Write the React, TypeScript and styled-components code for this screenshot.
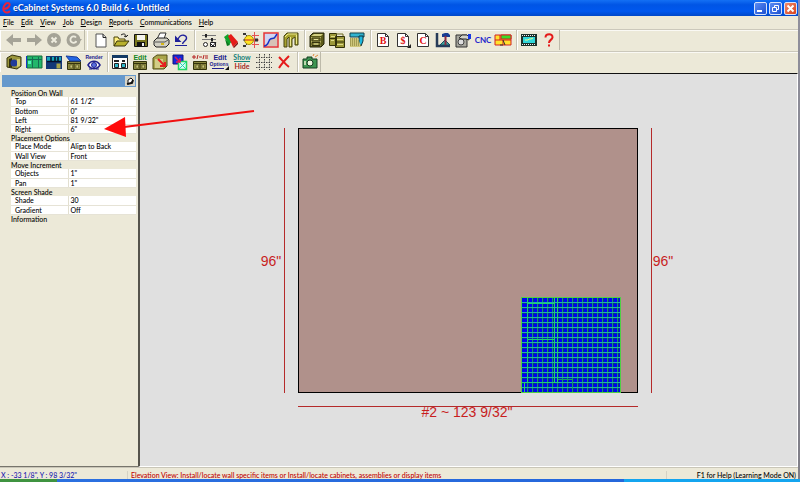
import React from "react";
import styled, { createGlobalStyle } from "styled-components";

const GlobalStyle = createGlobalStyle`
  * { box-sizing: border-box; }
  body { margin: 0; background: #ece9d8; }
  button { font: inherit; color: inherit; }
`;

const Desktop = styled.div`
  display: flex;
  flex-direction: column;
  min-height: 100vh;
  position: relative;
  overflow: hidden;
  font-family: Lato, "Noto Sans", sans-serif;
  font-size: 7px;
  font-weight: 500;
  line-height: 8px;
  color: #000;
`;

const WindowRow = styled.div`
  flex: 1;
  display: flex;
  background: linear-gradient(#7b86c8, #8f8f9b 16px, #807f88);
`;

const AppWindow = styled.div`
  flex: 1;
  min-width: 0;
  margin-right: 2px;
  display: flex;
  flex-direction: column;
  background: #ece9d8;
`;

const TitleBar = styled.header`
  display: flex;
  align-items: center;
  height: 16px;
  padding: 0 1px 0 2px;
  gap: 2px;
  background: linear-gradient(#1470f4, #0055e5 30%, #0058ee 70%, #0048c8);
`;

const Title = styled.h1`
  flex: 1;
  margin: 0;
  color: #fff;
  font: bold 9px/14px Lato, sans-serif;
  text-shadow: 1px 1px 0 #0a3794;
`;

const CaptionButton = styled.button<{ $close?: boolean }>`
  width: 13px;
  height: 13px;
  padding: 0;
  border: 1px solid #d5e2fb;
  border-radius: 2px;
  background: ${(p) => (p.$close ? "linear-gradient(135deg,#ee8a6b,#d8421c)" : "linear-gradient(135deg,#5b8cf4,#1c50d0)")};
  svg { display: block; }
`;

const MenuBar = styled.nav`
  display: flex;
  align-items: center;
  gap: 7px;
  height: 13px;
  padding-left: 3px;
`;

const MenuItem = styled.button`
  padding: 0;
  border: 0;
  background: none;
  line-height: 9px;
  &::first-letter { text-decoration: underline; }
`;

const ToolStrip = styled.div`
  display: flex;
  align-items: flex-start;
  height: 22px;
  border-top: 1px solid #cbc8bb;
  box-shadow: inset 0 1px #faf9f4;
`;

const ToolGroup = styled.div`
  display: flex;
  height: 20px;
  padding-left: 3px;
  margin-right: 2px;
  border-left: 1px solid #fff;
  border-right: 1px solid #bdbaaa;
`;

const ToolButton = styled.button<{ $wide?: boolean }>`
  display: flex;
  align-items: center;
  justify-content: center;
  width: ${(p) => (p.$wide ? 24 : 20)}px;
  height: 20px;
  padding: 0;
  border: 0;
  background: none;
`;

const Separator = styled.span`
  width: 6px;
  height: 20px;
  background: linear-gradient(90deg, transparent 3px, #c5c2b4 3px, #c5c2b4 4px, #fff 4px, #fff 5px, transparent 5px);
`;

const Workspace = styled.main`
  flex: 1;
  display: flex;
`;

const SidePanel = styled.aside`
  flex: 0 0 138px;
  padding: 2px 2px 0 2px;
  border-bottom: 1px solid #77756c;
`;

const PanelHeader = styled.div`
  display: flex;
  justify-content: flex-end;
  height: 12px;
  padding: 1px;
  margin-bottom: 1px;
  background: #6699cc;
`;

const PinButton = styled.button`
  width: 10px;
  height: 10px;
  padding: 0;
  border: 0;
  background: #d8d5c8;
  svg { display: block; }
`;

const PropertyTable = styled.table`
  width: 100%;
  border-collapse: collapse;
  table-layout: fixed;
`;

const SectionCell = styled.th`
  height: 9px;
  padding: 0 0 0 9px;
  text-align: left;
  font-weight: 500;
  line-height: 8px;
`;

const GutterCell = styled.td`
  width: 9px;
  padding: 0;
`;

const NameCell = styled.th`
  width: 57px;
  height: 9px;
  padding: 0 0 0 4px;
  border-right: 1px solid #e2dfd0;
  border-bottom: 1px solid #e6e3d6;
  background: #fff;
  text-align: left;
  font-weight: 500;
  line-height: 8px;
`;

const ValueCell = styled.td`
  padding: 0 0 0 2px;
  border-bottom: 1px solid #e6e3d6;
  background: #fff;
  line-height: 8px;
`;

const Canvas = styled.section`
  flex: 1;
  min-width: 0;
  display: flex;
  justify-content: center;
  align-items: flex-start;
  padding-top: 51px;
  border-top: 1px solid #111;
  border-left: 2px solid #55534c;
  border-right: 1px solid #fff;
  border-bottom: 1px solid #fff;
  background: #e0e0e0;
  svg { display: block; }
`;

const StatusBar = styled.footer`
  display: flex;
  align-items: center;
  height: 12px;
  padding: 2px 2px 0 1px;
  border-top: 1px solid #c9c6b8;
`;

const StatusCell = styled.span<{ $tone?: string; $width?: number }>`
  ${(p) => (p.$width ? `flex: 0 0 ${p.$width}px;` : "flex: 1;")}
  padding-left: ${(p) => (p.$tone === "#c00000" ? 3 : 0)}px;
  border-right: ${(p) => (p.$tone ? "1px solid #d5d2c4" : 0)};
  color: ${(p) => p.$tone ?? "#000"};
  text-align: ${(p) => (p.$tone ? "left" : "right")};
  white-space: nowrap;
`;

const TaskBar = styled.div`
  display: flex;
  height: 3px;
  background: linear-gradient(90deg, #3f9340 57px, #2b70e0 57px, #2567db 78%, #14a5ef 78%);
`;

const ArrowOverlay = styled.svg`
  position: absolute;
  left: 100px;
  top: 106px;
  pointer-events: none;
`;

const Gray = "#a5a397";
const page = <path d="M2.500 1.500h8l3 3v10h-11z" fill="#fff" stroke="#333" />;
const letter = (t: string) => (
  <>
    {page}
    <path d="M10.500 1.500v3h3" fill="none" stroke="#333" />
    <text x="8" y="12" textAnchor="middle" fontFamily="Liberation Serif" fontWeight="bold" fontSize="10" fill="#e01010">{t}</text>
  </>
);
const cabinet = (
  <>
    <path d="M1 4l3-3h11v11l-3 3H1z" fill="#5c5a18" stroke="#222208" />
    <path d="M2 5h10v9H2z" fill="#b3b05c" />
    <path d="M3 6h8v3H3zM3 10.500h8v3H3z" fill="#8a873a" stroke="#34330c" />
    <path d="M5 7.500h4M5 12h4" stroke="#e4e19a" />
    <path d="M2 4l3-2h9l-2 2z" fill="#d2cf80" />
  </>
);
const smallCabinet = (
  <>
    <path d="M1.500 7.500h13v8h-13z" fill="#8c8940" stroke="#34330c" />
    <path d="M2 9.500h12M8 10v5" stroke="#34330c" />
    <path d="M4 11h2.500v3H4zM10 11h2.500v3H10z" fill="#c9c57b" stroke="#55531b" strokeWidth=".6" />
  </>
);

const icons: Record<string, React.ReactNode> = {
  Back: <path d="M0 8l7-6v4h8v4H7v4z" fill={Gray} />,
  Forward: <path d="M16 8L9 2v4H1v4h8v4z" fill={Gray} />,
  Stop: <><circle cx="8" cy="8" r="7" fill={Gray} /><path d="M5.500 5.500l5 5m0-5l-5 5" stroke="#eeecdf" strokeWidth="2" /></>,
  Refresh: <><circle cx="7.500" cy="8" r="7" fill={Gray} /><path d="M10 5.500A3.200 3.200 0 1 0 10.500 9" fill="none" stroke="#eeecdf" strokeWidth="1.800" /><path d="M9 7h7l-3.500 4z" fill={Gray} /></>,
  New: <><path d="M3 2h7l3 3v10H3z" fill="#fff" stroke="#555" /><path d="M10 2v3.500h3" fill="#ddd" stroke="#222" /></>,
  Open: <><path d="M1 14V5h4l1 2h6v3" fill="#ffee80" stroke="#4a4308" /><path d="M1 14l3-5h12l-4 5z" fill="#b8b02c" stroke="#37330a" /><path d="M8 3c3-2 5-1 5 2m-2-1l2 1 2-2" fill="none" stroke="#222" /></>,
  Save: <><path d="M1.500 2.500h13v12h-13z" fill="#77751c" stroke="#111" /><path d="M4 3h8v5H4z" fill="#f4f4ee" /><path d="M4 10h8v4H4z" fill="#111" /><path d="M9 11h2v3H9z" fill="#eee" /></>,
  Print: <><path d="M4 7l3-6h6l-2 6z" fill="#fff" stroke="#333" /><path d="M1 9l3-3h10l2 2v4l-3 3H3l-2-2z" fill="#d1d0c4" stroke="#222" /><path d="M2 10h10l3-2" fill="none" stroke="#555" /><path d="M8 12h3" stroke="#d6b617" strokeWidth="2" /></>,
  Undo: <><path d="M5 7C8 1 14 3 13.500 6.500 13 9 10 9.500 9.500 12" fill="none" stroke="#20209a" strokeWidth="1.400" /><path d="M2 3.500v6.500h6.500z" fill="#20209a" /><path d="M2 13.500h12" stroke="#20209a" /></>,
  Settings: <><path d="M1 3.500h14M1 7.500h14" stroke="#777" /><path d="M5 2v3.500M11 6v3.500" stroke="#222" strokeWidth="2" /><circle cx="4.500" cy="12.500" r="2" fill="#fff" stroke="#222" /><path d="M9.500 10.500h5v4h-5z" fill="#fff" stroke="#222" /><path d="M10 12l2 2 3-4" fill="none" stroke="#222" /></>,
  Materials: <><path d="M1 5l4-3 4 7-3 4z" fill="#10a52c" /><path d="M5 4l3-2 7 8-5 5z" fill="#e51c18" /><path d="M10 15l5-5v2l-4 4z" fill="#861412" /><path d="M2 7l5 6-3 1z" fill="#087a1d" /></>,
  Hardware: <><path d="M11.500 0v16M9 3.500h7M9 8h7M9 12.500h7" stroke="#e55252" /><circle cx="6" cy="8" r="4.500" fill="#ffe321" stroke="#a08c0b" /><path d="M2 8h8" stroke="#cb2525" /><path d="M0 8h2M2 2l2 2M2 14l2-2" stroke="#454545" /><path d="M0 1h3v2H0zM0 13h3v2H0zM12 6.500h3v3h-3z" fill="#353535" /></>,
  Profile: <><path d="M1 1h14v14H1z" fill="#cfd4f2" stroke="#e63434" strokeWidth="1.500" /><path d="M2 14V12l4-1 1-5 5-1 2-3v12z" fill="#d8c2b6" /><path d="M1 14c4 0 4-3 5-5 1-4 5-1 6-4l2-3" fill="none" stroke="#1632c8" strokeWidth="1.500" /></>,
  Doors: <><path d="M1 4l3-3h11v12h-3V5L9 7v8H6V5L4 7v8H1z" fill="#a6a12f" stroke="#474512" /><path d="M2 5l3-3h9M13.500 3v9M7.500 5v9" fill="none" stroke="#ece88a" /></>,
  Cabinet: cabinet,
  Assemblies: <><path d="M.500 1.500h7v12h-7zM6.500 4.500h9v11h-9z" fill="#9c983a" stroke="#33310b" /><path d="M2 4.500h4M8 7.500h6M8 12.500h6M2 8.500h3" stroke="#e0dc8a" /><path d="M7 10h8M1 6.500h5" stroke="#33310b" /><path d="M7 2h7v2" fill="none" stroke="#6e6b20" /></>,
  Room: <><path d="M1 1h14v4H1z" fill="#30b4d0" stroke="#14404a" /><path d="M10 4h4v5l-2 5-2-2z" fill="#1fb9df" stroke="#12333b" /><path d="M1 6h8l3 9H1z" fill="#cfc77c" /><path d="M1 7h8M1 9h9M1 11h10M1 13h11" stroke="#77702c" strokeDasharray="1 1" /></>,
  "Buy list": letter("B"),
  Pricing: <>{letter("$")}<path d="M16 12v4h-4z" fill="#222" /></>,
  "Cut list": letter("C"),
  Construction: <><path d="M2 1v13h13" fill="none" stroke="#263b58" strokeWidth="2.500" /><path d="M5 13l5-5 5 5z" fill="#39a89d" stroke="#1d4a60" /><path d="M7 2l3-1h3l2 2v2H7z" fill="#173c91" /><path d="M10.500 4v9" stroke="#8a2c42" strokeWidth="2" /></>,
  Tooling: <><path d="M1 3h11v12H1z" fill="#a7a79e" stroke="#333" /><circle cx="6" cy="10" r="3" fill="#ddd" stroke="#444" /><path d="M4 6l3-3h5l2 2v3l-3-1H7z" fill="#d2d2c6" stroke="#333" /><path d="M13 2h3v5h-3z" fill="#1839e0" /></>,
  CNC: <text x="8" y="11" textAnchor="middle" fontFamily="Lato" fontWeight="bold" fontSize="8" fill="#2222cc">CNC</text>,
  Nesting: <><path d="M0 3h16v10H0z" fill="#ffe22c" stroke="#d32323" /><path d="M6 3h10v4H6z" fill="#39dc27" stroke="#d32323" /><path d="M0 8h16M5 3v5M8 8v5" stroke="#d32323" /><path d="M8 8l2 5M5 13h3" stroke="#333" /></>,
  Movie: <><path d="M0 2h16v12H0z" fill="#1b3029" /><path d="M2 5h12v6H2z" fill="#30d6d9" /><path d="M1 3.500h14M1 12.500h14" stroke="#eee" strokeDasharray="1 1" /><path d="M4 8h3l1-1h2l2-1" stroke="#e9ff8a" fill="none" /></>,
  Help: <><path d="M4.500 5.500C4.500 1 12 1 11.500 5.500 11 8 8 8 8 11" fill="none" stroke="#e41a1a" strokeWidth="2" /><path d="M7 12.500h2v2H7z" fill="#e41a1a" /></>,
  "Add cabinet": <><path d="M1 4l5-3 9 2v9l-4 3-10-2z" fill="#9a963c" stroke="#34320d" /><path d="M3 5l3-1v10l-3-1z" fill="#333110" /><circle cx="8" cy="9" r="3.500" fill="#203b99" /><path d="M11 5h3v7l-3 1z" fill="#d0ca75" /></>,
  "Wall view": <><path d="M1 2h15v12H1z" fill="#22b66b" stroke="#126d3b" /><path d="M1 5.500h15M6.500 3v11M12.500 3v11" stroke="#156d52" /><path d="M2 7h3v3H2z" fill="#52f3bc" /><path d="M.500 2v12" stroke="#1538cc" /></>,
  "Room view": <><path d="M0 2h16v13H0z" fill="#123778" /><path d="M1 3h14v4H1z" fill="#18a7bc" /><path d="M1 7.500h14M5 3v4M9 3v4M12 3v4" stroke="#06102b" strokeWidth="1.500" /><path d="M10.500 9.500h4v5h-4z" fill="#a9a448" /></>,
  "Cabinet list": <>{smallCabinet}<path d="M0 2l11 1 4 4H4z" fill="#2366e4" stroke="#183c9a" /></>,
  Render: <><text x="8" y="5" textAnchor="middle" fontFamily="Liberation Sans" fontWeight="bold" fontSize="5" fill="#20208c">Render</text><path d="M2 11c3-5 9-5 12 0-3 5-9 5-12 0z" fill="#fff" stroke="#20208c" strokeWidth="1.500" /><circle cx="8" cy="11" r="2.500" fill="#5a6fdd" stroke="#20208c" /><path d="M3 15h3M10 15h3" stroke="#20208c" /></>,
  Layout: <><path d="M.500 1.500h15v13H.500z" fill="#fff" stroke="#222" /><path d="M0 1h16v3H0z" fill="#143b65" /><path d="M2 6h5v2H2zM10 6h3v2h-3z" fill="#222" /><path d="M2.500 9.500h4v4h-4zM9.500 9.500h4v4h-4z" fill="#31b8ca" stroke="#222" /></>,
  "Edit cabinet": <>{smallCabinet}<text x="8" y="6" textAnchor="middle" fontFamily="Liberation Sans" fontWeight="bold" fontSize="7" fill="#148622">Edit</text></>,
  "Move cabinet": <><path d="M1 4l4-3h10v11l-3 3H1z" fill="#aaa54b" stroke="#504d17" /><path d="M3 5h8v9H3z" fill="#d2cd87" /><path d="M6 5l6 6m-4 1h5V8" fill="none" stroke="#e52020" strokeWidth="2" /></>,
  Copy: <><path d="M1 1h10v9H1z" fill="#1628da" stroke="#11147b" /><path d="M6.500 7.500h8v8h-8z" fill="#d6fff0" stroke="#22d861" strokeWidth="1.500" /><path d="M7 15l7-7M7 8l7 7" stroke="#28cdb6" /><path d="M3 3l5 5m-4 0h4V4" fill="none" stroke="#e41655" strokeWidth="1.500" /></>,
  Operations: <>{smallCabinet}<path d="M0 3h4M2 1v4M5 5l1-4M7 3h3M11 5l1-4M13 2h3M13 4h3" stroke="#b42121" /></>,
  "Edit Options": <><text x="8" y="6" textAnchor="middle" fontFamily="Liberation Sans" fontWeight="bold" fontSize="7" fill="#20208c">Edit</text><text x="7" y="12" textAnchor="middle" fontFamily="Liberation Sans" fontWeight="bold" fontSize="5" fill="#20208c">Options</text><path d="M0 14.500h12" stroke="#20208c" /><path d="M17 12v4h-4z" fill="#111" /></>,
  "Show Hide": <><text x="8" y="6" textAnchor="middle" fontFamily="Lato" fontWeight="bold" fontSize="7" fill="#148078">Show</text><path d="M0 7.500h16" stroke="#148078" /><text x="8" y="15" textAnchor="middle" fontFamily="Lato" fontWeight="bold" fontSize="7" fill="#a32525">Hide</text></>,
  Grid: <path d="M0 3.500h16M0 8.500h16M0 13.500h16M3.500 0v16M8.500 0v16M13.500 0v16" stroke="#444" strokeDasharray="1.500 1" />,
  Delete: <path d="M3 3c3 3 6 7 10 10M13 2C9 6 6 9 3 14" stroke="#e51b1b" strokeWidth="2" fill="none" />,
  Snapshot: <><path d="M1 5h4V3h5v2h5v9H1z" fill="#3e9652" stroke="#153e20" /><circle cx="8" cy="9" r="3" fill="#eef7df" stroke="#163b1e" /><path d="M11 2l1-2m1 3l3-2" stroke="#e28739" /><path d="M2 7h2v4H2z" fill="#bfdab1" /></>,
};

const row1a = ["Back", "Forward", "Stop", "Refresh"];
const row1b = ["New", "Open", "Save", "Print", "Undo", "|", "Settings", "Materials", "Hardware", "Profile", "Doors", "|", "Cabinet", "Assemblies", "Room", "|", "Buy list", "Pricing", "Cut list", "Construction", "Tooling", "CNC", "Nesting", "|", "Movie", "Help"];
const row2 = ["Add cabinet", "Wall view", "Room view", "Cabinet list", "Render", "|", "Layout", "Edit cabinet", "Move cabinet", "Copy", "Operations", "Edit Options", "Show Hide", "Grid", "Delete", "|", "Snapshot"];
const wideTools = ["Settings", "Show Hide"];

function Tools({ names }: { names: string[] }) {
  return (
    <ToolGroup role="group">
      {names.map((name, i) =>
        name === "|" ? (
          <Separator key={i} />
        ) : (
          <ToolButton key={i} aria-label={name} $wide={wideTools.includes(name)}>
            <svg width="16" height="16" viewBox="0 0 16 16" overflow="visible">{icons[name]}</svg>
          </ToolButton>
        )
      )}
    </ToolGroup>
  );
}

const sections: { title: string; rows: [string, string][] }[] = [
  { title: "Position On Wall", rows: [["Top", '61 1/2"'], ["Bottom", '0"'], ["Left", '81 9/32"'], ["Right", '6"']] },
  { title: "Placement Options", rows: [["Place Mode", "Align to Back"], ["Wall View", "Front"]] },
  { title: "Move Increment", rows: [["Objects", '1"'], ["Pan", '1"']] },
  { title: "Screen Shade", rows: [["Shade", "30"], ["Gradient", "Off"]] },
  { title: "Information", rows: [] },
];

function Elevation() {
  const cols = Array.from({ length: 19 }, (_, i) => 527 + i * 5);
  const lines = Array.from({ length: 18 }, (_, i) => 302 + i * 5);
  return (
    <svg width="420" height="298" viewBox="259 125 420 298" role="img" aria-label="Wall elevation">
      <g shapeRendering="crispEdges" fill="none">
        <rect x="298.500" y="128.500" width="339" height="264" fill="#b0918b" stroke="#000" />
        <path d="M284.500 128v265M651.500 128v265M298 406.500h340" stroke="#b52a2a" />
        <rect x="522" y="298" width="99" height="95" fill="#0000f4" />
        {cols.map((x) => <path key={x} d={`M${x + 1}.500 298v95`} stroke="#003b80" />)}
        {lines.map((y) => <path key={y} d={`M522 ${y + 1}.500h99`} stroke="#0030a0" />)}
        {cols.map((x) => <path key={x} d={`M${x}.500 298v95`} stroke="#13917c" />)}
        {lines.map((y) => <path key={y} d={`M522 ${y}.500h99`} stroke="#22b69b" />)}
        <path d="M527.500 298v84M554.500 298v84M557.500 298v84M522 382.500h36M524.500 382v11M528 303.500h27M528 339.500h27" stroke="#20cc78" />
        <path d="M558 379.500h14v13" stroke="#15966f" />
        <rect x="521.500" y="297.500" width="99" height="95" stroke="#4fcf45" />
      </g>
      <g fontFamily="Liberation Sans, Arial, sans-serif" fontSize="14" fill="#c81e1e">
        <text x="271" y="266" textAnchor="middle">96"</text>
        <text x="663" y="266" textAnchor="middle">96"</text>
        <text x="467" y="417" textAnchor="middle">#2 ~ 123 9/32"</text>
      </g>
    </svg>
  );
}

export default function App() {
  return (
    <Desktop>
      <GlobalStyle />
      <WindowRow>
        <AppWindow>
          <TitleBar>
            <svg width="9" height="12" viewBox="0 0 9 12"><path d="M1 7c7 0 8-6 5-6S0 6 2 9s5 1 6 0" fill="none" stroke="#e6243e" strokeWidth="2" /></svg>
            <Title>eCabinet Systems 6.0 Build 6 - Untitled</Title>
            <CaptionButton aria-label="Minimize"><svg width="11" height="11"><path d="M2 8h5" stroke="#fff" strokeWidth="2" /></svg></CaptionButton>
            <CaptionButton aria-label="Restore"><svg width="11" height="11"><path d="M4.500 4V2.500h4v4H7M2.500 4.500h4v4h-4z" fill="none" stroke="#fff" /></svg></CaptionButton>
            <CaptionButton aria-label="Close" $close><svg width="11" height="11"><path d="M2.500 2.500l6 6m0-6l-6 6" stroke="#fff" strokeWidth="2" /></svg></CaptionButton>
          </TitleBar>
          <MenuBar>
            {["File", "Edit", "View", "Job", "Design", "Reports", "Communications", "Help"].map((m) => <MenuItem key={m}>{m}</MenuItem>)}
          </MenuBar>
          <ToolStrip><Tools names={row1a} /><Tools names={row1b} /></ToolStrip>
          <ToolStrip><Tools names={row2} /></ToolStrip>
          <Workspace>
            <SidePanel>
              <PanelHeader>
                <PinButton aria-label="Pin panel"><svg width="10" height="10"><path d="M3 4l3-2 2 2-2 3-3 1z" fill="#fff" stroke="#111" /><path d="M2 8l5-1 1-3" fill="none" stroke="#111" strokeWidth="2" /></svg></PinButton>
              </PanelHeader>
              <PropertyTable>
                <colgroup><col width="9" /><col width="57" /><col /></colgroup>
                {sections.map((s) => (
                  <tbody key={s.title}>
                    <tr><SectionCell colSpan={3} scope="rowgroup">{s.title}</SectionCell></tr>
                    {s.rows.map(([name, value]) => (
                      <tr key={name}><GutterCell /><NameCell scope="row">{name}</NameCell><ValueCell>{value}</ValueCell></tr>
                    ))}
                  </tbody>
                ))}
              </PropertyTable>
            </SidePanel>
            <Canvas><Elevation /></Canvas>
          </Workspace>
          <StatusBar>
            <StatusCell $tone="#1818b0" $width={127}>X : -33 1/8", Y : 98 3/32"</StatusCell>
            <StatusCell $tone="#c00000">Elevation View: Install/locate wall specific items or Install/locate cabinets, assemblies or display items</StatusCell>
            <StatusCell $width={129}>F1 for Help (Learning Mode ON)</StatusCell>
          </StatusBar>
        </AppWindow>
      </WindowRow>
      <TaskBar />
      <ArrowOverlay width="160" height="36" viewBox="100 106 160 36">
        <path d="M124 127L254 111" stroke="#f01010" strokeWidth="2" />
        <path d="M104 129L125 117L126 137z" fill="#ff0a0a" />
      </ArrowOverlay>
    </Desktop>
  );
}
